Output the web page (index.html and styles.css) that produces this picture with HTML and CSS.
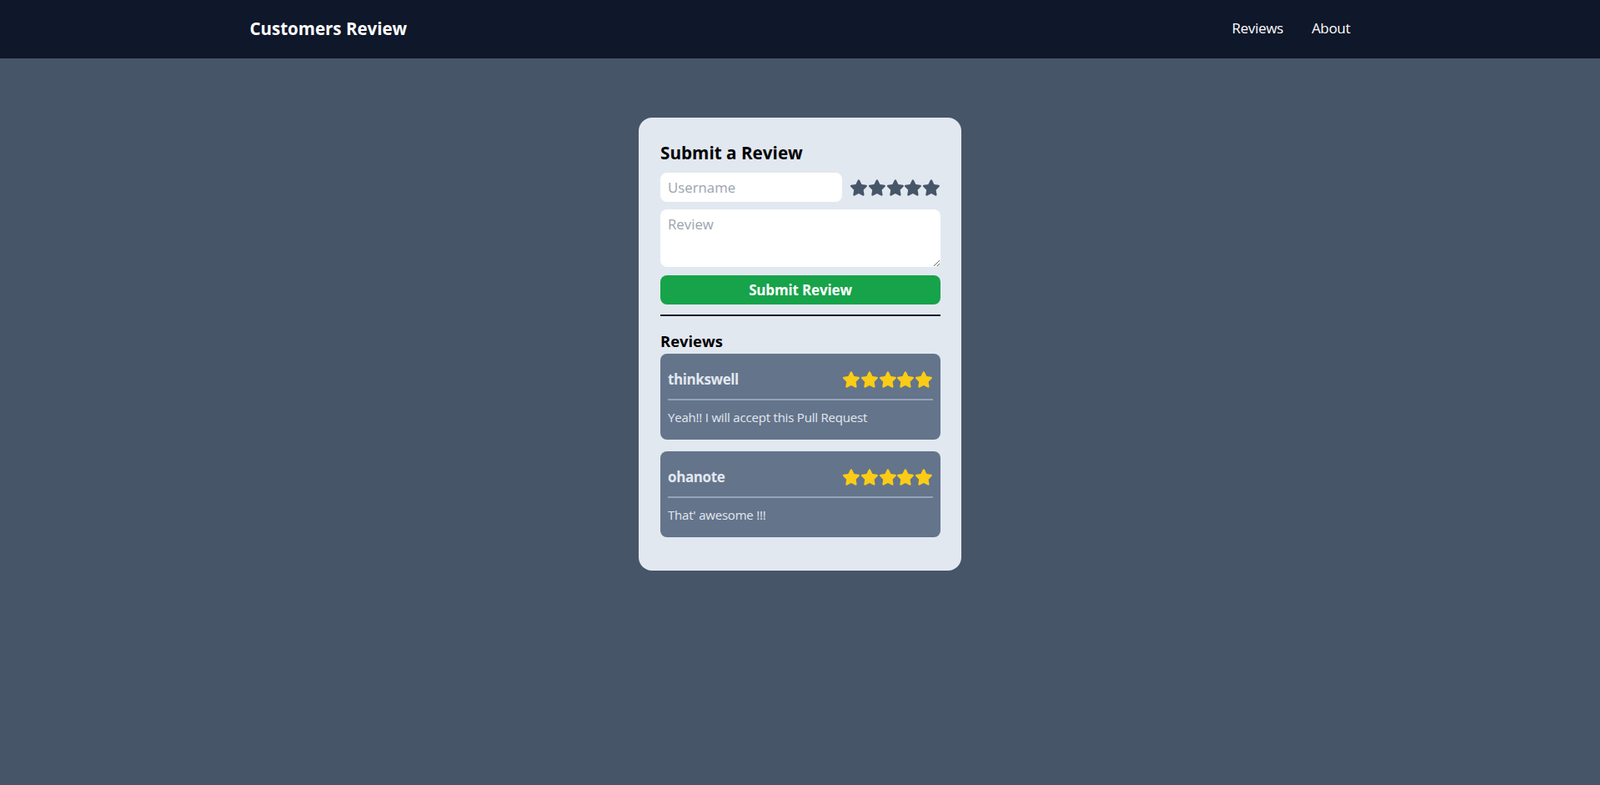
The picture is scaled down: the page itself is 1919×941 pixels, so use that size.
FILE: index.html
```html
<!DOCTYPE html>
<html lang="en">
<head>
<meta charset="utf-8">
<title>Customers Review</title>
<link rel="stylesheet" href="styles.css">
</head>
<body>
<header class="topbar">
  <div class="topbar-inner">
    <div class="brand">Customers Review</div>
    <nav class="nav">
      <a class="nav-link" href="#">Reviews</a>
      <a class="nav-link" href="#">About</a>
    </nav>
  </div>
</header>
<main class="main">
  <section class="card">
    <h2 class="card-title">Submit a Review</h2>
    <div class="row">
      <input class="field" type="text" placeholder="Username">
      <div class="stars stars-empty">
        <svg viewBox="0 0 576 512"><path d="M316.9 18C311.6 7 300.4 0 288.1 0s-23.4 7-28.8 18L195 150.3 51.4 171.5c-12 1.8-22 10.2-25.7 21.7s-.7 24.2 7.9 32.7L137.8 329 113.2 474.7c-2 12 3 24.2 12.9 31.3s23 8 33.8 2.3l128.3-68.5 128.3 68.5c10.8 5.7 23.9 4.9 33.8-2.3s14.9-19.3 12.9-31.3L438.5 329 542.7 225.9c8.6-8.5 11.7-21.2 7.9-32.7s-13.7-19.9-25.7-21.7L381.2 150.3 316.9 18z"/></svg>
        <svg viewBox="0 0 576 512"><path d="M316.9 18C311.6 7 300.4 0 288.1 0s-23.4 7-28.8 18L195 150.3 51.4 171.5c-12 1.8-22 10.2-25.7 21.7s-.7 24.2 7.9 32.7L137.8 329 113.2 474.7c-2 12 3 24.2 12.9 31.3s23 8 33.8 2.3l128.3-68.5 128.3 68.5c10.8 5.7 23.9 4.9 33.8-2.3s14.9-19.3 12.9-31.3L438.5 329 542.7 225.9c8.6-8.5 11.7-21.2 7.9-32.7s-13.7-19.9-25.7-21.7L381.2 150.3 316.9 18z"/></svg>
        <svg viewBox="0 0 576 512"><path d="M316.9 18C311.6 7 300.4 0 288.1 0s-23.4 7-28.8 18L195 150.3 51.4 171.5c-12 1.8-22 10.2-25.7 21.7s-.7 24.2 7.9 32.7L137.8 329 113.2 474.7c-2 12 3 24.2 12.9 31.3s23 8 33.8 2.3l128.3-68.5 128.3 68.5c10.8 5.7 23.9 4.9 33.8-2.3s14.9-19.3 12.9-31.3L438.5 329 542.7 225.9c8.6-8.5 11.7-21.2 7.9-32.7s-13.7-19.9-25.7-21.7L381.2 150.3 316.9 18z"/></svg>
        <svg viewBox="0 0 576 512"><path d="M316.9 18C311.6 7 300.4 0 288.1 0s-23.4 7-28.8 18L195 150.3 51.4 171.5c-12 1.8-22 10.2-25.7 21.7s-.7 24.2 7.9 32.7L137.8 329 113.2 474.7c-2 12 3 24.2 12.9 31.3s23 8 33.8 2.3l128.3-68.5 128.3 68.5c10.8 5.7 23.9 4.9 33.8-2.3s14.9-19.3 12.9-31.3L438.5 329 542.7 225.9c8.6-8.5 11.7-21.2 7.9-32.7s-13.7-19.9-25.7-21.7L381.2 150.3 316.9 18z"/></svg>
        <svg viewBox="0 0 576 512"><path d="M316.9 18C311.6 7 300.4 0 288.1 0s-23.4 7-28.8 18L195 150.3 51.4 171.5c-12 1.8-22 10.2-25.7 21.7s-.7 24.2 7.9 32.7L137.8 329 113.2 474.7c-2 12 3 24.2 12.9 31.3s23 8 33.8 2.3l128.3-68.5 128.3 68.5c10.8 5.7 23.9 4.9 33.8-2.3s14.9-19.3 12.9-31.3L438.5 329 542.7 225.9c8.6-8.5 11.7-21.2 7.9-32.7s-13.7-19.9-25.7-21.7L381.2 150.3 316.9 18z"/></svg>
      </div>
    </div>
    <textarea class="field area" placeholder="Review"></textarea>
    <button class="submit" type="button">Submit Review</button>
    <div class="divider"></div>
    <h3 class="list-title">Reviews</h3>
    <div class="review">
      <div class="review-head">
        <span class="review-user">thinkswell</span>
        <div class="stars stars-full">
          <svg viewBox="0 0 576 512"><path d="M316.9 18C311.6 7 300.4 0 288.1 0s-23.4 7-28.8 18L195 150.3 51.4 171.5c-12 1.8-22 10.2-25.7 21.7s-.7 24.2 7.9 32.7L137.8 329 113.2 474.7c-2 12 3 24.2 12.9 31.3s23 8 33.8 2.3l128.3-68.5 128.3 68.5c10.8 5.7 23.9 4.9 33.8-2.3s14.9-19.3 12.9-31.3L438.5 329 542.7 225.9c8.6-8.5 11.7-21.2 7.9-32.7s-13.7-19.9-25.7-21.7L381.2 150.3 316.9 18z"/></svg>
          <svg viewBox="0 0 576 512"><path d="M316.9 18C311.6 7 300.4 0 288.1 0s-23.4 7-28.8 18L195 150.3 51.4 171.5c-12 1.8-22 10.2-25.7 21.7s-.7 24.2 7.9 32.7L137.8 329 113.2 474.7c-2 12 3 24.2 12.9 31.3s23 8 33.8 2.3l128.3-68.5 128.3 68.5c10.8 5.7 23.9 4.9 33.8-2.3s14.9-19.3 12.9-31.3L438.5 329 542.7 225.9c8.6-8.5 11.7-21.2 7.9-32.7s-13.7-19.9-25.7-21.7L381.2 150.3 316.9 18z"/></svg>
          <svg viewBox="0 0 576 512"><path d="M316.9 18C311.6 7 300.4 0 288.1 0s-23.4 7-28.8 18L195 150.3 51.4 171.5c-12 1.8-22 10.2-25.7 21.7s-.7 24.2 7.9 32.7L137.8 329 113.2 474.7c-2 12 3 24.2 12.9 31.3s23 8 33.8 2.3l128.3-68.5 128.3 68.5c10.8 5.7 23.9 4.9 33.8-2.3s14.9-19.3 12.9-31.3L438.5 329 542.7 225.9c8.6-8.5 11.7-21.2 7.9-32.7s-13.7-19.9-25.7-21.7L381.2 150.3 316.9 18z"/></svg>
          <svg viewBox="0 0 576 512"><path d="M316.9 18C311.6 7 300.4 0 288.1 0s-23.4 7-28.8 18L195 150.3 51.4 171.5c-12 1.8-22 10.2-25.7 21.7s-.7 24.2 7.9 32.7L137.8 329 113.2 474.7c-2 12 3 24.2 12.9 31.3s23 8 33.8 2.3l128.3-68.5 128.3 68.5c10.8 5.7 23.9 4.9 33.8-2.3s14.9-19.3 12.9-31.3L438.5 329 542.7 225.9c8.6-8.5 11.7-21.2 7.9-32.7s-13.7-19.9-25.7-21.7L381.2 150.3 316.9 18z"/></svg>
          <svg viewBox="0 0 576 512"><path d="M316.9 18C311.6 7 300.4 0 288.1 0s-23.4 7-28.8 18L195 150.3 51.4 171.5c-12 1.8-22 10.2-25.7 21.7s-.7 24.2 7.9 32.7L137.8 329 113.2 474.7c-2 12 3 24.2 12.9 31.3s23 8 33.8 2.3l128.3-68.5 128.3 68.5c10.8 5.7 23.9 4.9 33.8-2.3s14.9-19.3 12.9-31.3L438.5 329 542.7 225.9c8.6-8.5 11.7-21.2 7.9-32.7s-13.7-19.9-25.7-21.7L381.2 150.3 316.9 18z"/></svg>
        </div>
      </div>
      <div class="review-rule"></div>
      <p class="review-text">Yeah!! I will accept this Pull Request</p>
    </div>
    <div class="review">
      <div class="review-head">
        <span class="review-user">ohanote</span>
        <div class="stars stars-full">
          <svg viewBox="0 0 576 512"><path d="M316.9 18C311.6 7 300.4 0 288.1 0s-23.4 7-28.8 18L195 150.3 51.4 171.5c-12 1.8-22 10.2-25.7 21.7s-.7 24.2 7.9 32.7L137.8 329 113.2 474.7c-2 12 3 24.2 12.9 31.3s23 8 33.8 2.3l128.3-68.5 128.3 68.5c10.8 5.7 23.9 4.9 33.8-2.3s14.9-19.3 12.9-31.3L438.5 329 542.7 225.9c8.6-8.5 11.7-21.2 7.9-32.7s-13.7-19.9-25.7-21.7L381.2 150.3 316.9 18z"/></svg>
          <svg viewBox="0 0 576 512"><path d="M316.9 18C311.6 7 300.4 0 288.1 0s-23.4 7-28.8 18L195 150.3 51.4 171.5c-12 1.8-22 10.2-25.7 21.7s-.7 24.2 7.9 32.7L137.8 329 113.2 474.7c-2 12 3 24.2 12.9 31.3s23 8 33.8 2.3l128.3-68.5 128.3 68.5c10.8 5.7 23.9 4.9 33.8-2.3s14.9-19.3 12.9-31.3L438.5 329 542.7 225.9c8.6-8.5 11.7-21.2 7.9-32.7s-13.7-19.9-25.7-21.7L381.2 150.3 316.9 18z"/></svg>
          <svg viewBox="0 0 576 512"><path d="M316.9 18C311.6 7 300.4 0 288.1 0s-23.4 7-28.8 18L195 150.3 51.4 171.5c-12 1.8-22 10.2-25.7 21.7s-.7 24.2 7.9 32.7L137.8 329 113.2 474.7c-2 12 3 24.2 12.9 31.3s23 8 33.8 2.3l128.3-68.5 128.3 68.5c10.8 5.7 23.9 4.9 33.8-2.3s14.9-19.3 12.9-31.3L438.5 329 542.7 225.9c8.6-8.5 11.7-21.2 7.9-32.7s-13.7-19.9-25.7-21.7L381.2 150.3 316.9 18z"/></svg>
          <svg viewBox="0 0 576 512"><path d="M316.9 18C311.6 7 300.4 0 288.1 0s-23.4 7-28.8 18L195 150.3 51.4 171.5c-12 1.8-22 10.2-25.7 21.7s-.7 24.2 7.9 32.7L137.8 329 113.2 474.7c-2 12 3 24.2 12.9 31.3s23 8 33.8 2.3l128.3-68.5 128.3 68.5c10.8 5.7 23.9 4.9 33.8-2.3s14.9-19.3 12.9-31.3L438.5 329 542.7 225.9c8.6-8.5 11.7-21.2 7.9-32.7s-13.7-19.9-25.7-21.7L381.2 150.3 316.9 18z"/></svg>
          <svg viewBox="0 0 576 512"><path d="M316.9 18C311.6 7 300.4 0 288.1 0s-23.4 7-28.8 18L195 150.3 51.4 171.5c-12 1.8-22 10.2-25.7 21.7s-.7 24.2 7.9 32.7L137.8 329 113.2 474.7c-2 12 3 24.2 12.9 31.3s23 8 33.8 2.3l128.3-68.5 128.3 68.5c10.8 5.7 23.9 4.9 33.8-2.3s14.9-19.3 12.9-31.3L438.5 329 542.7 225.9c8.6-8.5 11.7-21.2 7.9-32.7s-13.7-19.9-25.7-21.7L381.2 150.3 316.9 18z"/></svg>
        </div>
      </div>
      <div class="review-rule"></div>
      <p class="review-text">That' awesome !!!</p>
    </div>
  </section>
</main>
</body>
</html>
```

FILE: styles.css
```css
* { box-sizing: border-box; }
html, body { margin: 0; padding: 0; }
body {
  background: #475569;
  min-height: 100vh;
  font-family: "Open Sans", "Noto Sans", "Liberation Sans", sans-serif;
  color: #000;
}
.topbar {
  height: 70px;
  background: #0f172a;
}
.topbar-inner {
  max-width: 1320px;
  height: 100%;
  margin: 0 auto;
  display: flex;
  align-items: center;
  justify-content: space-between;
}
.brand {
  color: #fff;
  font-size: 20.5px;
  font-weight: 700;
  line-height: 28px;
  margin-top: -2px;
}
.nav { display: flex; gap: 34px; margin-top: -2px; }
.nav-link {
  color: #fff;
  text-decoration: none;
  font-size: 17px;
  line-height: 28px;
  letter-spacing: -0.3px;
}
.main {
  display: flex;
  justify-content: center;
  padding-top: 71px;
}
.card {
  width: 387px;
  background: #e2e8f0;
  border-radius: 16px;
  padding: 28px 25px 40px 26px;
  display: flex;
  flex-direction: column;
}
.card-title {
  margin: 0 0 10px;
  font-size: 20.7px;
  line-height: 28px;
  font-weight: 700;
}
.row {
  display: flex;
  align-items: center;
  gap: 9px;
}
.field {
  border: none;
  outline: none;
  background: #fff;
  border-radius: 8px;
  font-family: inherit;
  font-size: 16.8px;
  color: #111827;
  padding: 0 9px;
}
.field::placeholder { color: #9ca3af; }
.row .field { flex: 1; height: 35px; min-width: 0; }
.area {
  display: block;
  margin-top: 9px;
  height: 69px;
  width: 100%;
  padding-top: 4px;
  line-height: 28px;
}
.stars { display: flex; }
.stars svg { width: 21.8px; height: 20px; display: block; }
.stars-empty svg { fill: #475569; }
.stars-full svg { fill: #facc15; }
.submit {
  margin-top: 10px;
  height: 35px;
  border: none;
  border-radius: 8px;
  background: #16a34a;
  color: #fff;
  font-family: inherit;
  font-size: 17px;
  font-weight: 700;
  letter-spacing: -0.15px;
}
.divider {
  margin-top: 12px;
  height: 2px;
  background: #0f172a;
}
.list-title {
  margin: 16px 0 1px;
  font-size: 18.4px;
  line-height: 28px;
  font-weight: 700;
}
.review {
  background: #64748b;
  border-radius: 8px;
  padding: 8px 9px 15px;
  margin-bottom: 14px;
}
.review:last-child { margin-bottom: 0; }
.review-head {
  height: 46px;
  display: flex;
  align-items: center;
  justify-content: space-between;
}
.review-user {
  color: #e2e8f0;
  font-size: 17px;
  font-weight: 700;
  line-height: 28px;
  letter-spacing: -0.4px;
}
.review-rule {
  height: 2px;
  background: #94a3b8;
}
.review-text {
  margin: 8px 0 0;
  color: #e2e8f0;
  font-size: 15px;
  line-height: 24px;
  letter-spacing: -0.2px;
}
```
